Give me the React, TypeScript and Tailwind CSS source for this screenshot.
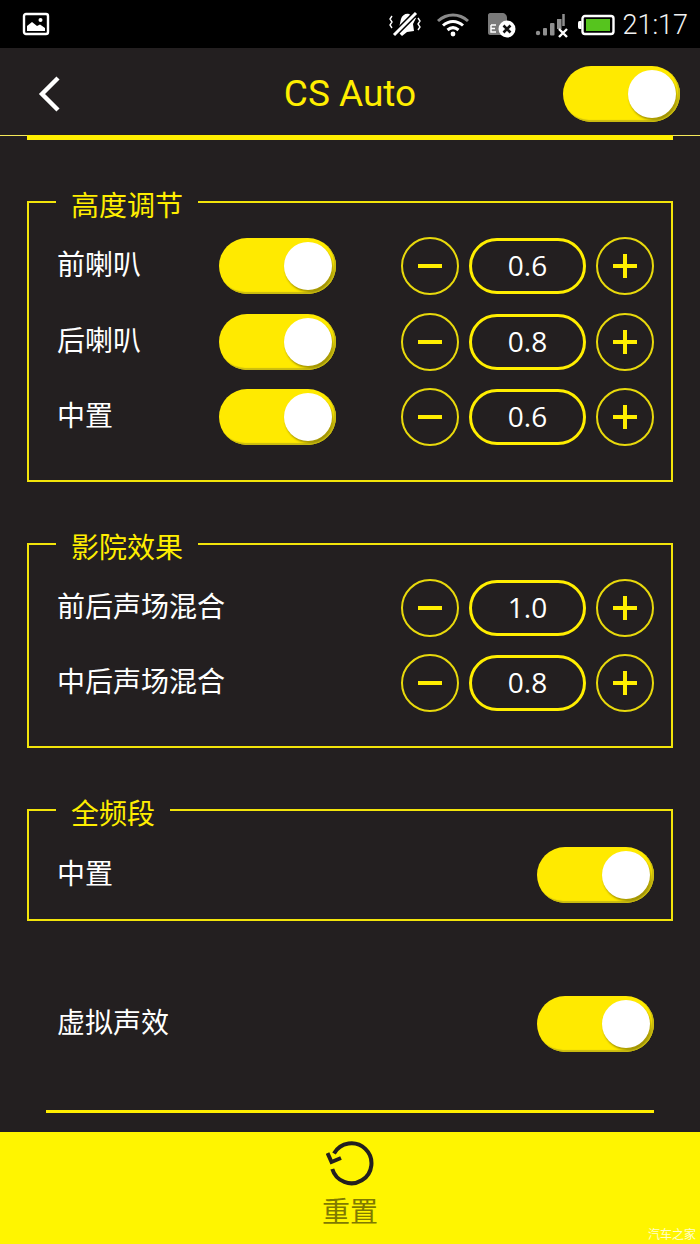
const cjk = "font-['Noto_Sans_CJK_SC','Noto_Sans',sans-serif]";

function Toggle() {
  return (
    <div className="flex h-14 w-[117px] shrink-0 items-center justify-end rounded-full bg-[#ffea00] pr-1 shadow-[inset_-2px_-2px_1px_#c9bb10]">
      <div className="h-12 w-12 rounded-full bg-white shadow-[1px_2px_2px_rgba(60,50,0,0.45)]" />
    </div>
  );
}

function RoundButton({ plus }: { plus?: boolean }) {
  return (
    <div className="relative flex h-[58px] w-[58px] shrink-0 items-center justify-center rounded-full border-2 border-[#e8d90c]">
      <svg width="26" height="26" viewBox="0 0 26 26" className="text-[#ffee00]">
        <path d={plus ? 'M1 13H25M13 1V25' : 'M1 13H25'} stroke="currentColor" strokeWidth="4" fill="none" />
      </svg>
    </div>
  );
}

function Stepper({ value }: { value: string }) {
  return (
    <div className="flex items-center gap-[10px]">
      <RoundButton />
      <div className="flex h-[56px] w-[117px] items-center justify-center rounded-full border-[3px] border-[#ffee00] pb-[2px] font-['Open_Sans',sans-serif] text-[28px] text-white">
        {value}
      </div>
      <RoundButton plus />
    </div>
  );
}

function Row({ label, toggle, value }: { label: string; toggle?: boolean; value?: string }) {
  return (
    <div className="flex h-14 items-center">
      <span className={`${cjk} w-[162px] pb-[6px] text-[28px] leading-none whitespace-nowrap text-white`}>{label}</span>
      {toggle && <Toggle />}
      {value && <div className="ml-auto"><Stepper value={value} /></div>}
    </div>
  );
}

function Section({ title, children, className }: { title: string; children: React.ReactNode; className: string }) {
  return (
    <fieldset className={`min-w-0 border-2 border-[#f2e40a] pr-[17px] pl-[28px] ${className}`}>
      <legend className={`${cjk} -ml-px h-[40px] px-[15px] pt-[2px] text-[28px] leading-[40px] text-[#ffee00]`}>{title}</legend>
      {children}
    </fieldset>
  );
}

function StatusBar() {
  return (
    <div className="flex h-[48px] shrink-0 items-center bg-black pr-[12px] pl-[22px]">
      {/* picture notification */}
      <svg width="28" height="24" viewBox="0 0 28 24" fill="none">
        <rect x="2" y="2" width="24" height="20" rx="2" stroke="#fff" strokeWidth="2.4" />
        <path d="M5 19V14L10 10L15 14L18 12.5L23 16V19Z" fill="#fff" />
        <circle cx="18.5" cy="8" r="2" fill="#fff" />
      </svg>
      <div className="ml-auto flex items-center pt-[2px]">
        {/* muted vibrate */}
        <svg width="32" height="28" viewBox="0 0 32 28" fill="none" className="-mt-[2px]">
          <path d="M9 22L12 9C13 5 17 3 20 4L27 8L24 14L25 21L18 22L13 26Z" fill="#fff" />
          <path d="M4 26L28 2" stroke="#000" strokeWidth="6" />
          <path d="M5 25L27 3" stroke="#fff" strokeWidth="3" />
          <path d="M3 6L1 9L3 12L1 15L3 18M29 8L31 11L29 14L31 17L29 20" stroke="#fff" strokeWidth="1.4" />
        </svg>
        {/* wifi */}
        <svg width="32" height="24" viewBox="0 0 32 24" fill="none" className="ml-[16px] -mt-[1px]">
          <path d="M1 8C10 0 22 0 31 8" stroke="#8a8a8a" strokeWidth="3" />
          <path d="M6 12.5C12 7 20 7 26 12.5" stroke="#fff" strokeWidth="3" />
          <path d="M10.5 17C14 14 18 14 21.5 17" stroke="#fff" strokeWidth="3" />
          <circle cx="16" cy="21" r="2.4" fill="#fff" />
        </svg>
        {/* sim with error badge */}
        <svg width="30" height="26" viewBox="0 0 30 26" fill="none" className="ml-[18px] -mt-[1px]">
          <path d="M1 3C1 2 2 1 3 1H15C18 1 20 3 20 6V23H3C2 23 1 22 1 21Z" fill="#7a7a7a" />
          <path d="M4 13V20H9M4 16.5H8M4 13H9" stroke="#fff" strokeWidth="1.4" />
          <circle cx="20" cy="17" r="8.5" fill="#fff" />
          <path d="M16.5 13.5L23.5 20.5M23.5 13.5L16.5 20.5" stroke="#111" strokeWidth="2.6" />
        </svg>
        {/* no signal */}
        <svg width="34" height="26" viewBox="0 0 34 26" fill="none" className="ml-[18px]">
          <circle cx="3" cy="21" r="2.2" fill="#8f8f8f" />
          <rect x="8" y="16" width="4" height="7.5" rx="1" fill="#8f8f8f" />
          <rect x="15" y="11" width="4.5" height="12.5" rx="1" fill="#8f8f8f" />
          <rect x="22" y="7" width="4.5" height="10" fill="#8f8f8f" />
          <path d="M28.5 2V14" stroke="#8f8f8f" strokeWidth="2.5" />
          <path d="M24 17L32 25M32 17L24 25" stroke="#fff" strokeWidth="2.4" />
        </svg>
        {/* battery */}
        <svg width="37" height="22" viewBox="0 0 37 22" fill="none" className="ml-[9px]">
          <path d="M3.5 7H1.5Q0 7 0 9V13Q0 15 1.5 15H3.5Z" fill="#fff" />
          <rect x="4.5" y="2" width="31" height="18" rx="2.5" stroke="#fff" strokeWidth="2.4" />
          <rect x="8" y="5" width="24" height="12" fill="#56c41e" />
        </svg>
        <span className="ml-[7px] font-['Roboto',sans-serif] text-[27px] leading-none font-light text-[#f2f2f2]">21:17</span>
      </div>
    </div>
  );
}

function Header() {
  return (
    <div className="relative flex h-[88px] shrink-0 items-center border-b border-[#f5e95a] px-[20px] pt-[4px]">
      <div className="flex-1">
        <svg width="24" height="36" viewBox="0 0 24 36" fill="none" className="ml-[18px]">
          <path d="M20 2L4 18L20 34" stroke="#fff" strokeWidth="4.4" />
        </svg>
      </div>
      <span className="font-['Roboto',sans-serif] text-[37px] leading-none text-[#ffee00]">CS Auto</span>
      <div className="flex flex-1 justify-end">
        <Toggle />
      </div>
      <div className="absolute right-[27px] -bottom-[5px] left-[27px] h-[5px] bg-[#ffee00]" />
    </div>
  );
}

export default function App() {
  return (
    <div className="flex h-[1244px] w-[700px] flex-col overflow-hidden bg-[#231f20]">
      <StatusBar />
      <Header />
      <main className="flex flex-1 flex-col px-[27px] pt-[46px]">
        <Section title="高度调节" className="pt-[16px] pb-[35px]">
          <div className="flex flex-col gap-[19.5px]">
            <Row label="前喇叭" toggle value="0.6" />
            <Row label="后喇叭" toggle value="0.8" />
            <Row label="中置" toggle value="0.6" />
          </div>
        </Section>
        <Section title="影院效果" className="mt-[42px] pt-[16px] pb-[35px]">
          <div className="flex flex-col gap-[19px]">
            <Row label="前后声场混合" value="1.0" />
            <Row label="中后声场混合" value="0.8" />
          </div>
        </Section>
        <Section title="全频段" className="mt-[42px] pt-[17px] pb-[16px]">
          <div className="flex h-14 items-center justify-between">
            <span className={`${cjk} pb-[6px] text-[28px] leading-none text-white`}>中置</span>
            <Toggle />
          </div>
        </Section>
        <div className="mt-[75px] flex h-14 items-center justify-between pr-[19px] pl-[30px]">
          <span className={`${cjk} pb-[6px] text-[28px] leading-none text-white`}>虚拟声效</span>
          <Toggle />
        </div>
        <div className="mx-[19px] mt-[58px] h-[3px] bg-[#ffee00]" />
      </main>
      <footer className="relative flex h-[112px] shrink-0 flex-col items-center bg-[#fff500] pt-[9px]">
        <svg width="50" height="48" viewBox="0 0 50 48" fill="none" className="ml-[2px] text-[#231f20]">
          <path d="M8 12.5A20 20 0 1 1 6.3 28" stroke="currentColor" strokeWidth="4" />
          <path d="M1.5 12L5.5 21L15 17" stroke="currentColor" strokeWidth="4" />
        </svg>
        <span className={`${cjk} mt-[7px] text-[28px] leading-none text-[#7f7a00]`}>重置</span>
        <span className={`${cjk} absolute right-[4px] bottom-[4px] text-[12px] leading-none text-white/80`}>汽车之家</span>
      </footer>
    </div>
  );
}
